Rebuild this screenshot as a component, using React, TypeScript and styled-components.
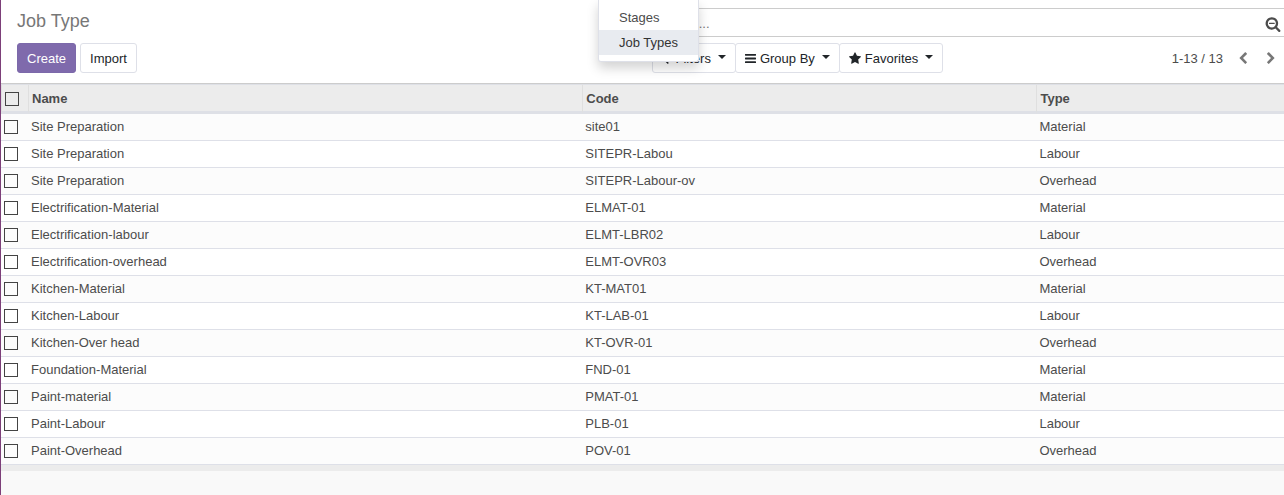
import React, { useState } from "react";
import styled, { createGlobalStyle } from "styled-components";

const GlobalStyle = createGlobalStyle`
  *, *::before, *::after { box-sizing: border-box; }
  body {
    margin: 0;
    background: #f9f9f9;
    color: #4c4c4c;
    font: 13px/20px "Liberation Sans", Arial, sans-serif;
  }
  button, input { font: inherit; }
`;

const Page = styled.div`
  position: relative;
  min-height: 100vh;
  border-left: 1px solid #7c3f79;
  overflow: hidden;
`;

const ControlPanel = styled.header`
  display: grid;
  grid-template-columns: 1fr 1fr;
  padding-top: 8px;
  padding-bottom: 10px;
  row-gap: 6px;
  background: #fff;
  border-bottom: 1px solid #ccc;
`;

const Title = styled.h1`
  margin: 0;
  padding-left: 16px;
  font-size: 18px;
  font-weight: 400;
  line-height: 26px;
  color: #777;
`;

const SearchBox = styled.div`
  display: flex;
  align-items: center;
  height: 29px;
  margin-left: 9px;
  padding: 2px 3px 0 5px;
  border: solid #ccc;
  border-width: 1px 0 1px 1px;
`;

const SearchInput = styled.input`
  flex: 1;
  min-width: 0;
  padding: 0;
  border: 0;
  outline: 0;
  background: transparent;
  color: #4c4c4c;
  &::placeholder { color: #777; opacity: 1; }
`;

const IconButton = styled.button`
  display: flex;
  padding: 0;
  border: 0;
  background: transparent;
  color: ${(p) => p.color};
`;

const Actions = styled.div`
  display: flex;
  gap: 4px;
  padding-left: 16px;
`;

const Button = styled.button<{ $primary?: boolean }>`
  height: 30px;
  padding: 2px 9px 0;
  border: 1px solid ${(p) => (p.$primary ? "#7c69aa" : "#dee0e8")};
  border-radius: 3px;
  background: ${(p) => (p.$primary ? "#7f6aac" : "#fff")};
  color: ${(p) => (p.$primary ? "#fff" : "#212529")};
`;

const Options = styled.div`
  display: flex;
  align-items: center;
  justify-content: space-between;
  padding: 0 6px 0 9px;
`;

const ButtonGroup = styled.div`
  display: flex;
`;

const MenuButton = styled(Button)`
  display: flex;
  align-items: center;
  gap: 4px;
  & + & { margin-left: -1px; }
  svg { margin-bottom: 2px; }
`;

const Caret = styled.span`
  margin: 0 0 5px 3px;
  border: solid transparent;
  border-width: 4px 4px 0;
  border-top-color: #212529;
`;

const Pager = styled.nav`
  display: flex;
  align-items: center;
`;

const PagerText = styled.span`
  padding-top: 2px;
`;

const PagerButtons = styled.div`
  display: flex;
  gap: 14px;
  margin-left: 13px;
`;

const Menu = styled.ul`
  position: absolute;
  top: 0;
  left: 597px;
  z-index: 1;
  margin: 0;
  padding: 5px 0 6px;
  list-style: none;
  background: #fff;
  border: 1px solid #dee0e8;
  border-top: 0;
  border-radius: 0 0 3px 3px;
  box-shadow: 0 6px 12px rgba(0, 0, 0, 0.175);
`;

const MenuLink = styled.a<{ $active?: boolean }>`
  display: block;
  padding: 0 20px;
  line-height: 25px;
  text-decoration: none;
  color: ${(p) => (p.$active ? "#333" : "#4c4c4c")};
  background: ${(p) => (p.$active ? "#e8ebf0" : "transparent")};
`;

const Table = styled.table`
  width: 100%;
  table-layout: fixed;
  border-collapse: separate;
  border-spacing: 0;
  background: #fff;
`;

const Col = styled.col<{ $width?: string }>`
  width: ${(p) => p.$width ?? "auto"};
`;

const HeadCell = styled.th`
  height: 30px;
  padding: 1px 3px 0;
  text-align: left;
  background: #ececec;
  border: solid #dee0e6;
  border-width: 1px 0 3px 1px;
  border-left-color: #dfdfdf;
`;

const Row = styled.tr`
  &:nth-child(odd) { background: #fcfcfc; }
`;

const Cell = styled.td`
  height: 27px;
  padding: 0 3px;
  border-bottom: 1px solid #dee0e8;
`;

const Checkbox = styled.input`
  appearance: none;
  display: block;
  width: 14px;
  height: 14px;
  margin: 0;
  border: 1px solid #444;
  &:checked { background: #7c69aa; }
`;

const TableEnd = styled.div`
  height: 6px;
  background: #ececec;
`;

type Glyph = { width: number; height: number; box: string; path: string };

const glyphs: Record<string, Glyph> = {
  filter: {
    width: 10,
    height: 13,
    box: "192 0 1408 1792",
    path: "M1595 295q17 41-14 70l-493 493v742q0 42-39 59-13 5-25 5-27 0-45-19l-256-256q-19-19-19-45v-486l-493-493q-31-29-14-70 17-39 59-39h1280q42 0 59 39z",
  },
  bars: {
    width: 11,
    height: 13,
    box: "128 0 1536 1792",
    path: "M1664 1344v128q0 26-19 45t-45 19h-1408q-26 0-45-19t-19-45v-128q0-26 19-45t45-19h1408q26 0 45 19t19 45zm0-512v128q0 26-19 45t-45 19h-1408q-26 0-45-19t-19-45v-128q0-26 19-45t45-19h1408q26 0 45 19t19 45zm0-512v128q0 26-19 45t-45 19h-1408q-26 0-45-19t-19-45v-128q0-26 19-45t45-19h1408q26 0 45 19t19 45z",
  },
  star: {
    width: 12,
    height: 13,
    box: "64 0 1664 1792",
    path: "M1728 647q0 22-26 48l-363 354 86 500q1 7 1 20 0 21-10.5 35.5t-30.5 14.5q-19 0-40-12l-449-236-449 236q-22 12-40 12-21 0-31.5-14.5t-10.5-35.5q0-6 2-20l86-500-364-354q-25-27-25-48 0-37 56-46l502-73 225-455q19-41 49-41t49 41l225 455 502 73q56 9 56 46z",
  },
  searchMinus: {
    width: 16,
    height: 16,
    box: "0 0 1792 1792",
    path: "M1088 800v64q0 13-9.5 22.5t-22.5 9.5h-576q-13 0-22.5-9.5t-9.5-22.5v-64q0-13 9.5-22.5t22.5-9.5h576q13 0 22.5 9.5t9.5 22.5zm128 32q0-185-131.5-316.5t-316.5-131.5-316.5 131.5-131.5 316.5 131.5 316.5 316.5 131.5 316.5-131.5 131.5-316.5zm512 832q0 53-37.5 90.5t-90.5 37.5q-54 0-90-38l-343-342q-179 124-399 124-143 0-273.5-55.5t-225-150-150-225-55.5-273.5 55.5-273.5 150-225 225-150 273.5-55.5 273.5 55.5 225 150 150 225 55.5 273.5q0 220-124 399l343 343q37 37 37 90z",
  },
  left: {
    width: 14,
    height: 13,
    box: "0 0 1792 1792",
    path: "M1427 301l-531 531 531 531q19 19 19 45t-19 45l-166 166q-19 19-45 19t-45-19l-742-742q-19-19-19-45t19-45l742-742q19-19 45-19t45 19l166 166q19 19 19 45t-19 45z",
  },
  right: {
    width: 14,
    height: 13,
    box: "0 0 1792 1792",
    path: "M1363 877l-742 742q-19 19-45 19t-45-19l-166-166q-19-19-19-45t19-45l531-531-531-531q-19-19-19-45t19-45l166-166q19-19 45-19t45 19l742 742q19 19 19 45t-19 45z",
  },
};

function Icon({ name }: { name: string }) {
  const { width, height, box, path } = glyphs[name];
  return (
    <svg width={width} height={height} viewBox={box} fill="currentColor" aria-hidden="true">
      <path d={path} />
    </svg>
  );
}

const jobTypes = [
  ["Site Preparation", "site01", "Material"],
  ["Site Preparation", "SITEPR-Labou", "Labour"],
  ["Site Preparation", "SITEPR-Labour-ov", "Overhead"],
  ["Electrification-Material", "ELMAT-01", "Material"],
  ["Electrification-labour", "ELMT-LBR02", "Labour"],
  ["Electrification-overhead", "ELMT-OVR03", "Overhead"],
  ["Kitchen-Material", "KT-MAT01", "Material"],
  ["Kitchen-Labour", "KT-LAB-01", "Labour"],
  ["Kitchen-Over head", "KT-OVR-01", "Overhead"],
  ["Foundation-Material", "FND-01", "Material"],
  ["Paint-material", "PMAT-01", "Material"],
  ["Paint-Labour", "PLB-01", "Labour"],
  ["Paint-Overhead", "POV-01", "Overhead"],
];

export default function App() {
  const [selected, setSelected] = useState<string[]>([]);
  const codes = jobTypes.map((job) => job[1]);
  const toggle = (code: string) =>
    setSelected((s) => (s.includes(code) ? s.filter((c) => c !== code) : [...s, code]));

  return (
    <Page>
      <GlobalStyle />
      <Menu>
        <li><MenuLink href="#stages">Stages</MenuLink></li>
        <li><MenuLink href="#job-types" $active>Job Types</MenuLink></li>
      </Menu>
      <ControlPanel>
        <Title>Job Type</Title>
        <SearchBox>
          <SearchInput type="text" placeholder="Search..." aria-label="Search" />
          <IconButton color="#4c4c4c" aria-label="Advanced search">
            <Icon name="searchMinus" />
          </IconButton>
        </SearchBox>
        <Actions>
          <Button $primary>Create</Button>
          <Button>Import</Button>
        </Actions>
        <Options>
          <ButtonGroup>
            <MenuButton><Icon name="filter" />Filters<Caret /></MenuButton>
            <MenuButton><Icon name="bars" />Group By<Caret /></MenuButton>
            <MenuButton><Icon name="star" />Favorites<Caret /></MenuButton>
          </ButtonGroup>
          <Pager aria-label="Pager">
            <PagerText>1-13 / 13</PagerText>
            <PagerButtons>
              <IconButton color="#777" aria-label="Previous"><Icon name="left" /></IconButton>
              <IconButton color="#777" aria-label="Next"><Icon name="right" /></IconButton>
            </PagerButtons>
          </Pager>
        </Options>
      </ControlPanel>
      <Table>
        <colgroup>
          <Col $width="27px" />
          <Col $width="43.2%" />
          <Col $width="35.4%" />
          <Col />
        </colgroup>
        <thead>
          <tr>
            <HeadCell>
              <Checkbox
                type="checkbox"
                aria-label="Select all"
                checked={selected.length === codes.length}
                onChange={(e) => setSelected(e.target.checked ? codes : [])}
              />
            </HeadCell>
            <HeadCell>Name</HeadCell>
            <HeadCell>Code</HeadCell>
            <HeadCell>Type</HeadCell>
          </tr>
        </thead>
        <tbody>
          {jobTypes.map(([name, code, type]) => (
            <Row key={code}>
              <Cell>
                <Checkbox
                  type="checkbox"
                  aria-label={`Select ${code}`}
                  checked={selected.includes(code)}
                  onChange={() => toggle(code)}
                />
              </Cell>
              <Cell>{name}</Cell>
              <Cell>{code}</Cell>
              <Cell>{type}</Cell>
            </Row>
          ))}
        </tbody>
      </Table>
      <TableEnd />
    </Page>
  );
}
